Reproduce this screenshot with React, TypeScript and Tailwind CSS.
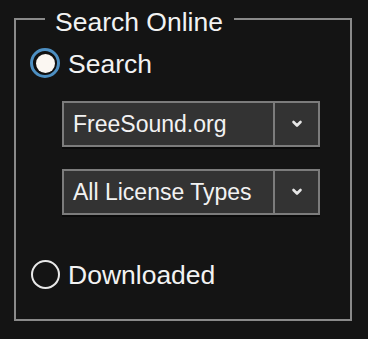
import React from "react";

function Chevron() {
  return (
    <svg width="12" height="8" viewBox="0 0 12 8" fill="none">
      <path d="M2.5 2 L6 5.5 L9.5 2" stroke="#e6e6e6" strokeWidth="2.6" strokeLinecap="round" strokeLinejoin="round" />
    </svg>
  );
}

function Select({ label }: { label: string }) {
  return (
    <div className="flex w-[258px] h-[46px] bg-[#333333] border-2 border-[#7c7c7c] shadow-[0_2px_0_rgba(0,0,0,0.5)]">
      <div className="flex-1 flex items-center pl-[9px] text-[23px] leading-none text-[#f2f2f2]">{label}</div>
      <div className="w-[45px] border-l-2 border-[#7c7c7c] flex items-center justify-center">
        <Chevron />
      </div>
    </div>
  );
}

export default function App() {
  return (
    <div className="w-[368px] h-[339px] bg-[#141414] font-['Liberation_Sans',Arial,sans-serif] text-[#f2f2f2]">
      <fieldset className="ml-[14px] w-[338px] border-2 border-[#8a8a8a] p-0 m-0 pb-[30px]">
        <legend className="ml-[29px] pl-[10px] pr-[11px] pt-[7px] text-[26.5px] leading-[30px]">Search Online</legend>
        <div className="flex items-center h-[30px] mt-[11px] pl-[14px]">
          <div className="w-[30px] h-[30px] rounded-full border-[3px] border-[#4d8fc2] flex items-center justify-center bg-[#101010]">
            <div className="w-[19px] h-[19px] rounded-full bg-[#fbf7f2]" />
          </div>
          <span className="ml-[8px] text-[26.5px] leading-[30px] translate-y-[1px]">Search</span>
        </div>
        <div className="flex flex-col gap-[22px] pl-[46px] mt-[23px]">
          <Select label="FreeSound.org" />
          <Select label="All License Types" />
        </div>
        <div className="flex items-center h-[30px] mt-[44px] pl-[15px]">
          <div className="w-[29px] h-[29px] rounded-full border-2 border-[#e8e8e8]" />
          <span className="ml-[8px] text-[26.5px] leading-[30px] translate-y-[1px]">Downloaded</span>
        </div>
      </fieldset>
    </div>
  );
}
